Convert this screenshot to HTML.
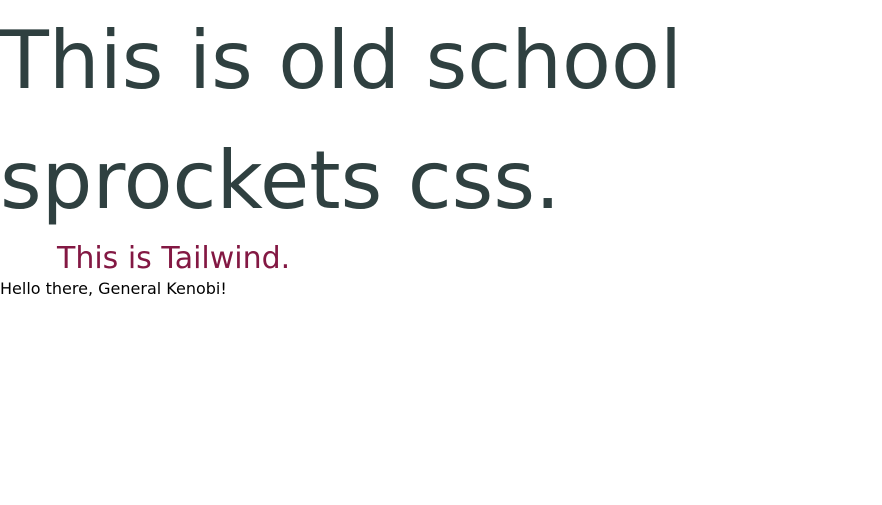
<!DOCTYPE html>
<html>
<head>
<meta charset="utf-8">
<style>
html,body{margin:0;padding:0;background:#fff;}
body{font-family:"DejaVu Sans","Liberation Sans",sans-serif;padding-top:1px;}
h1{margin:0;font-weight:normal;font-size:80px;line-height:120px;color:#2f4040;}
.tw{margin:0;padding-left:57px;font-size:30px;line-height:36px;color:#831843;}
.hello{margin:0;font-size:16px;line-height:24px;color:#000;}
</style>
</head>
<body>
<h1>This is old school sprockets css.</h1>
<p class="tw">This is Tailwind.</p>
<p class="hello">Hello there, General Kenobi!</p>
</body>
</html>
